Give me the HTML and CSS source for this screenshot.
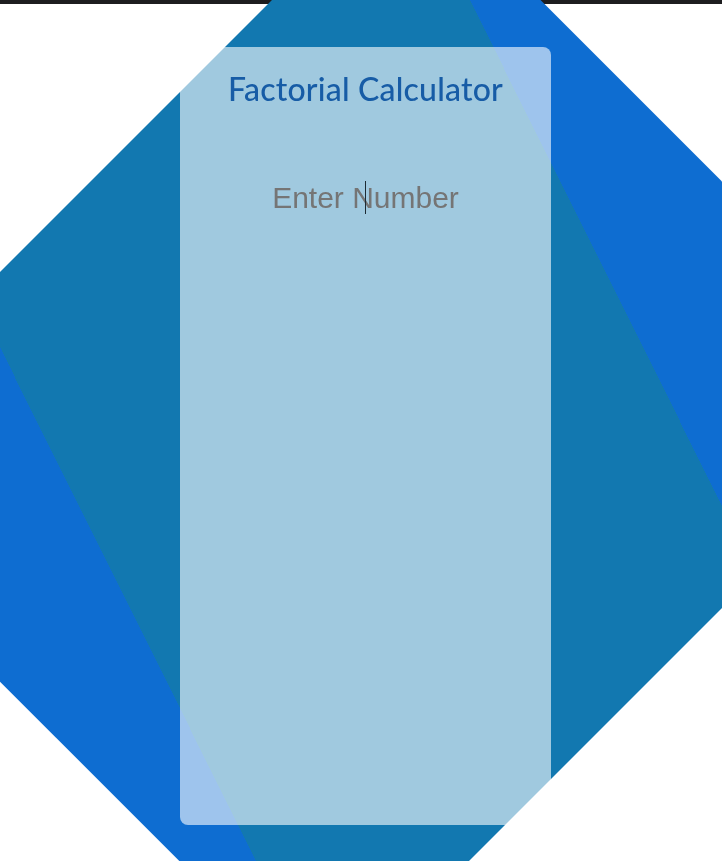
FILE: index.html
```html
<!doctype html>
<html>
<head>
<meta charset="utf-8">
<title>Factorial Calculator</title>
<link rel="stylesheet" href="styles.css">
</head>

<body>
<div class="topbar"></div>
<div class="page">
	<div class="card">
		<h1 class="title">Factorial Calculator</h1>
		<div class="field">
			<input class="number" type="text" placeholder="Enter Number" autofocus>
			<span class="caret"></span>
		</div>
	</div>
</div>
</body>
</html>
```

FILE: styles.css
```css
*{margin:0; padding:0; box-sizing:border-box;}
html,body{height:100%; background:#fff;}
body{overflow:hidden;}
.topbar{height:4px; background:#1d1d1f;}
.page{height:857px; position:relative; padding:43px 171px 0 180px;}
.page::before{content:""; position:absolute; left:0; top:-4px; width:722px; height:861px;
	background:linear-gradient(63.5deg,#0e6dd1 calc(50% - 286px),#1278b0 calc(50% - 286px),#1278b0 calc(50% + 289.5px),#0e6dd1 calc(50% + 289.5px));
	clip-path:polygon(272px 0,540.5px 0,722px 181.5px,722px 608px,469px 861px,179.3px 861px,0 681.7px,0 272px);}
.card{position:relative; height:778px; border-radius:8px; background:rgba(255,255,255,0.6); text-align:center; display:flex; flex-direction:column; align-items:center; will-change:transform;}
.title{font:normal 500 32px/34px Lato,"DejaVu Sans",sans-serif; letter-spacing:.2px; color:#175ca6; margin-top:25px;}
.field{position:relative; width:100%; margin-top:72px;}
.number{display:block; width:100%; height:40px; border:0; outline:0; background:transparent; text-align:center; font:30px "Liberation Sans",Arial,sans-serif; caret-color:transparent;}
.number::placeholder{color:#757575; opacity:1;}
.caret{position:absolute; left:185px; top:3px; width:1px; height:33px; background:#1d2a33;}
```
